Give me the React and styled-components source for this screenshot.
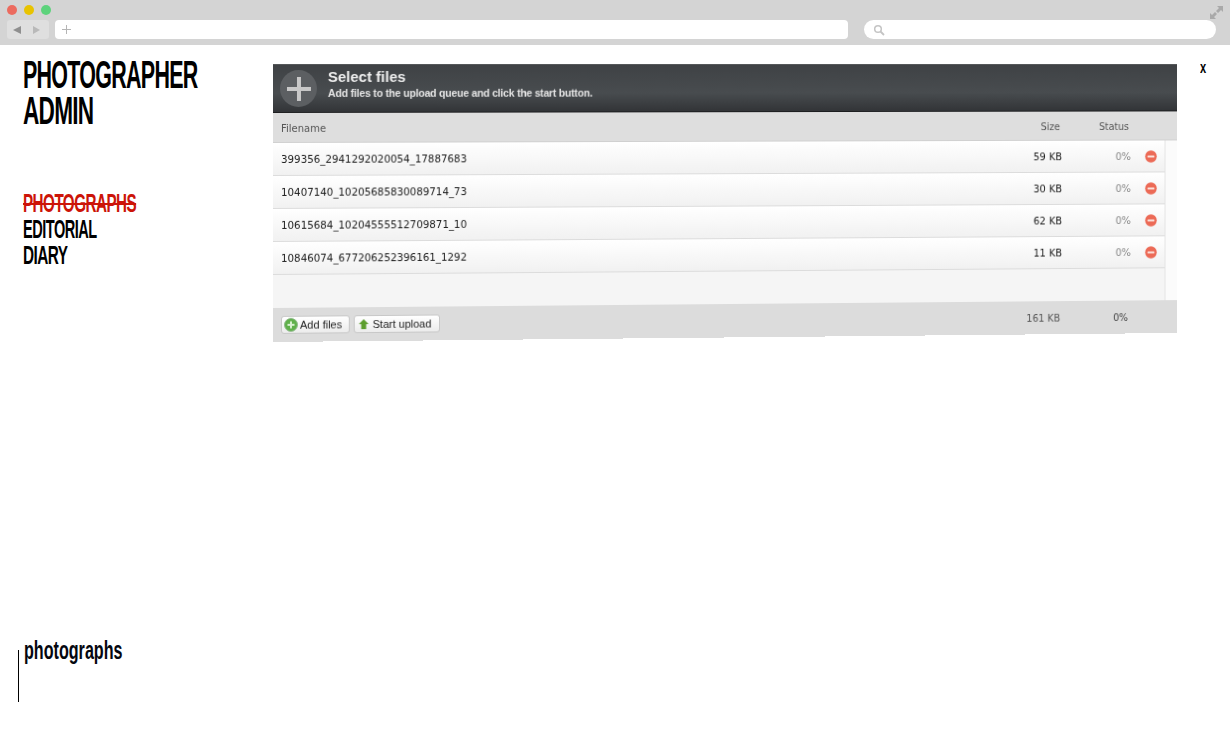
import React from "react";
import styled, { createGlobalStyle } from "styled-components";

const files = [
  { name: "399356_2941292020054_17887683", size: "59 KB" },
  { name: "10407140_10205685830089714_73", size: "30 KB" },
  { name: "10615684_10204555512709871_10", size: "62 KB" },
  { name: "10846074_677206252396161_1292", size: "11 KB" },
];

const GlobalStyle = createGlobalStyle`
  html, body {
    margin: 0;
    height: 745px;
    overflow: hidden;
    background: #fff;
    font-family: "Liberation Sans", Arial, sans-serif;
  }
`;

const Chrome = styled.div`
  height: 45px;
  box-sizing: border-box;
  padding: 4px 7px 0;
  background: #d4d4d4;
  display: flex;
  flex-direction: column;
  gap: 5px;
`;

const ChromeTop = styled.div`
  display: flex;
  align-items: center;
  justify-content: space-between;
  height: 11px;
`;

const Lights = styled.div`
  display: flex;
  gap: 7px;
`;

const Light = styled.span`
  width: 10px;
  height: 10px;
  border-radius: 50%;
  background: ${({ $color }) => $color};
`;

const ExpandIcon = styled.svg`
  margin-top: 5px;
`;

const ChromeBottom = styled.div`
  display: flex;
  align-items: center;
  height: 19px;
`;

const NavButtons = styled.div`
  width: 42px;
  height: 19px;
  box-sizing: border-box;
  padding: 0 9px 0 6px;
  border-radius: 3px;
  background: #dfdfdf;
  display: flex;
  align-items: center;
  justify-content: space-between;
  margin-right: 6px;
`;

const UrlBar = styled.div`
  width: 793px;
  height: 19px;
  box-sizing: border-box;
  padding-left: 7px;
  border-radius: 4px;
  background: #fff;
  display: flex;
  align-items: center;
  margin-right: 16px;
`;

const SearchBar = styled.div`
  width: 352px;
  height: 19px;
  box-sizing: border-box;
  padding-left: 9px;
  border-radius: 10px;
  background: #fff;
  display: flex;
  align-items: center;
`;

const Page = styled.div`
  height: 700px;
  display: flex;
`;

const Sidebar = styled.aside`
  width: 273px;
  flex: none;
  display: flex;
  flex-direction: column;
`;

const Narrow = styled.span`
  display: block;
  width: max-content;
  font-weight: 700;
  transform: scaleX(${({ $x }) => $x});
  transform-origin: 0 50%;
`;

const Brand = styled.h1`
  margin: 12px 0 0 23px;
  font-size: 39px;
  line-height: 36px;
  font-weight: 700;
  letter-spacing: -1.3px;
  color: #000;
`;

const Nav = styled.nav`
  margin: 61px 0 0 23px;
  display: flex;
  flex-direction: column;
`;

const NavItem = styled.a`
  font-size: 26px;
  line-height: 26px;
  letter-spacing: -0.9px;
  color: ${({ $active }) => ($active ? "#cc1408" : "#000")};
  text-decoration: ${({ $active }) => ($active ? "line-through" : "none")};
`;

const Section = styled.div`
  margin: 382px 0 0 18px;
  height: 52px;
  border-left: 1px solid #000;
  padding-left: 5px;
`;

const SectionName = styled.div`
  margin-top: -14px;
  font-size: 25px;
  line-height: 28px;
  color: #05070f;
`;

const PanelSlot = styled.main`
  width: 904px;
  flex: none;
  padding-top: 19px;
`;

/* the upload panel is a slightly warped photo in the reference: flat top, bottom edge climbs to the right */
const Panel = styled.div`
  width: 934px;
  outline: 1px solid transparent;
  transform: matrix3d(1, 0, 0, 0.00003585, 0, 1, 0, 0, 0, 0, 1, 0, 0, 0, 0, 1);
  transform-origin: 0 0;
  font-family: "DejaVu Sans", sans-serif;
`;

const PanelHead = styled.div`
  height: 49px;
  box-sizing: border-box;
  padding-left: 7px;
  border-top: 1px solid #55585a;
  border-bottom: 1px solid #1c1d1f;
  background: linear-gradient(#3f4245, #484c4f 60%, #323437);
  display: flex;
  align-items: center;
  gap: 11px;
  color: #f2f2f2;
  font-family: "Liberation Sans", sans-serif;
`;

const PlusDisc = styled.div`
  width: 37px;
  height: 37px;
  border-radius: 50%;
  background: #5c5f62;
  display: flex;
  align-items: center;
  justify-content: center;
`;

const HeadText = styled.div`
  padding-bottom: 9px;
`;

const HeadTitle = styled.div`
  font-size: 15px;
  line-height: 17px;
  font-weight: 700;
  color: #eee;
`;

const HeadSub = styled.div`
  font-size: 10.6px;
  line-height: 16px;
  letter-spacing: -0.21px;
  font-weight: 700;
  color: #e4e4e4;
`;

const Grid = styled.div`
  display: grid;
  grid-template-columns: 186px 1fr 72px 73px ${({ $last }) => $last}px;
  align-items: center;
  padding-left: 8px;
  box-sizing: border-box;
`;

const ColumnHead = styled(Grid)`
  height: 30px;
  padding-top: 1px;
  background: #dedede;
  border-bottom: 1px solid #d0d0d0;
  color: #555;
  font-size: 10px;
`;

const Body = styled.div`
  height: 165px;
  display: flex;
  background: #f5f5f5;
`;

const Rows = styled.div`
  flex: 1;
  border-right: 1px solid #e2e2e2;
`;

const ScrollTrack = styled.div`
  width: 12px;
  background: #fbfbfb;
`;

const Row = styled(Grid)`
  height: 33px;
  border-bottom: 1px solid #dcdcdc;
  background: linear-gradient(#fff, #f1f1f1);
  color: #1b1b1b;
  font-size: 10.3px;
`;

const FileName = styled.div`
  white-space: nowrap;
`;

const Cell = styled.div`
  grid-column: ${({ $col }) => $col};
  text-align: right;
  color: ${({ $color }) => $color || "inherit"};
`;

const IconCell = styled.div`
  grid-column: 5;
  display: flex;
  justify-content: flex-end;
  padding-right: 8px;
`;

const PanelFoot = styled.div`
  height: 34px;
  box-sizing: border-box;
  background: #dcdcdc;
  display: flex;
  align-items: center;
  padding: 0 52px 0 8px;
  color: #555;
  font-size: 10px;
`;

const FootButtons = styled.div`
  display: flex;
  gap: 4px;
  flex: 1;
  font-family: "Liberation Sans", sans-serif;
`;

const Button = styled.button`
  height: 18px;
  width: ${({ $w }) => $w}px;
  box-sizing: border-box;
  padding: 0 0 0 2px;
  border: 1px solid #c8c8c8;
  border-radius: 3px;
  background: linear-gradient(#fff, #ececec);
  display: flex;
  align-items: center;
  gap: 2px;
  font-family: inherit;
  font-size: 11px;
  color: #222;
`;

const FootStatus = styled.div`
  width: 72px;
  text-align: right;
  color: #444;
`;

const Close = styled.div`
  margin: 15px 0 0 23px;
  font-size: 17px;
  line-height: 16px;
  color: #000;
`;

const RemoveIcon = () => (
  <svg width="13" height="13" viewBox="0 0 13 13">
    <circle cx="6.5" cy="6.5" r="6.2" fill="#ec6a56" />
    <rect x="2.8" y="5.4" width="7.4" height="2.2" rx="0.6" fill="#fbe2dc" />
  </svg>
);

const App = () => (
  <>
    <GlobalStyle />
    <Chrome>
      <ChromeTop>
        <Lights>
          <Light $color="#ec6b5f" />
          <Light $color="#e8c300" />
          <Light $color="#5dd37c" />
        </Lights>
        <ExpandIcon width="13" height="13" viewBox="0 0 13 13">
          <path d="M7 0h6v6l-2-2-3 3-2-2 3-3zM6 13H0V7l2 2 3-3 2 2-3 3z" fill="#a9a9a9" />
        </ExpandIcon>
      </ChromeTop>
      <ChromeBottom>
        <NavButtons>
          <svg width="8" height="8" viewBox="0 0 8 8"><path d="M0 4l8-4v8z" fill="#8f8f8f" /></svg>
          <svg width="7" height="8" viewBox="0 0 7 8"><path d="M7 4L0 0v8z" fill="#b9b9b9" /></svg>
        </NavButtons>
        <UrlBar>
          <svg width="9" height="9" viewBox="0 0 9 9"><path d="M4 0h1v4h4v1H5v4H4V5H0V4h4z" fill="#b5b5b5" /></svg>
        </UrlBar>
        <SearchBar>
          <svg width="12" height="12" viewBox="0 0 12 12">
            <circle cx="5" cy="5" r="3.3" fill="none" stroke="#c4c4c4" strokeWidth="1.5" />
            <path d="M7.5 7.5L11 11" stroke="#c4c4c4" strokeWidth="1.8" />
          </svg>
        </SearchBar>
      </ChromeBottom>
    </Chrome>
    <Page>
      <Sidebar>
        <Brand>
          <Narrow $x={0.55}>PHOTOGRAPHER</Narrow>
          <Narrow $x={0.58}>ADMIN</Narrow>
        </Brand>
        <Nav>
          <NavItem $active><Narrow $x={0.585}>PHOTOGRAPHS</Narrow></NavItem>
          <NavItem><Narrow $x={0.56}>EDITORIAL</Narrow></NavItem>
          <NavItem><Narrow $x={0.59}>DIARY</Narrow></NavItem>
        </Nav>
        <Section>
          <SectionName><Narrow $x={0.645}>photographs</Narrow></SectionName>
        </Section>
      </Sidebar>
      <PanelSlot>
        <Panel>
          <PanelHead>
            <PlusDisc>
              <svg width="26" height="26" viewBox="0 0 26 26">
                <path d="M11 1h4v10h10v4H15v10h-4V15H1v-4h10z" fill="#c9c9c9" />
              </svg>
            </PlusDisc>
            <HeadText>
              <HeadTitle>Select files</HeadTitle>
              <HeadSub>Add files to the upload queue and click the start button.</HeadSub>
            </HeadText>
          </PanelHead>
          <ColumnHead $last={51}>
            <div>Filename</div>
            <Cell $col={3}>Size</Cell>
            <Cell $col={4}>Status</Cell>
          </ColumnHead>
          <Body>
            <Rows>
              {files.map(file => (
                <Row key={file.name} $last={36}>
                  <FileName>{file.name}</FileName>
                  <Cell $col={3}>{file.size}</Cell>
                  <Cell $col={4} $color="#888">0%</Cell>
                  <IconCell><RemoveIcon /></IconCell>
                </Row>
              ))}
            </Rows>
            <ScrollTrack />
          </Body>
          <PanelFoot>
            <FootButtons>
              <Button $w={69}>
                <svg width="14" height="14" viewBox="0 0 14 14">
                  <circle cx="7" cy="7" r="6.5" fill="#5fb04a" stroke="#8fb98a" />
                  <path d="M6 3.5h2V6h2.5v2H8v2.5H6V8H3.5V6H6z" fill="#d8f0d0" />
                </svg>
                Add files
              </Button>
              <Button $w={87}>
                <svg width="14" height="12" viewBox="0 0 14 12">
                  <path d="M7 1l5 5H9.5v5h-5V6H2z" fill="#5d9e2e" />
                </svg>
                Start upload
              </Button>
            </FootButtons>
            <div>161 KB</div>
            <FootStatus>0%</FootStatus>
          </PanelFoot>
        </Panel>
      </PanelSlot>
      <Close><Narrow $x={0.65}>x</Narrow></Close>
    </Page>
  </>
);

export default App;
